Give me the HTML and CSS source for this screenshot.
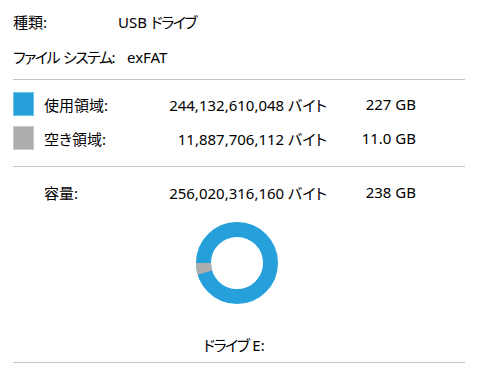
FILE: index.html
```html
<!DOCTYPE html>
<html lang="ja">
<head>
<meta charset="utf-8">
<title>ドライブ E: のプロパティ</title>
<link rel="stylesheet" href="styles.css">
</head>
<body>
<main class="props">
  <section class="info">
    <div class="info-row">
      <span class="info-label type-label">種類:</span>
      <span class="info-value">USB <span class="kana">ドライブ</span></span>
    </div>
    <div class="info-row">
      <span class="info-label fs-label"><span class="kana">ファイル</span> <span class="kana">システム</span>:</span>
      <span class="info-value">exFAT</span>
    </div>
  </section>

  <hr class="rule">

  <section class="usage">
    <div class="usage-row">
      <span class="swatch swatch-used"></span>
      <span class="usage-label">使用領域:</span>
      <span class="usage-bytes">244,132,610,048 バイト</span>
      <span class="usage-size">227 GB</span>
    </div>
    <div class="usage-row">
      <span class="swatch swatch-free"></span>
      <span class="usage-label">空き領域:</span>
      <span class="usage-bytes">11,887,706,112 バイト</span>
      <span class="usage-size">11.0 GB</span>
    </div>
  </section>

  <hr class="rule">

  <section class="capacity">
    <div class="usage-row">
      <span class="swatch-gap"></span>
      <span class="usage-label">容量:</span>
      <span class="usage-bytes">256,020,316,160 バイト</span>
      <span class="usage-size">238 GB</span>
    </div>
  </section>

  <div class="chart">
    <svg class="donut" width="84" height="84" viewBox="0 0 84 84" aria-hidden="true">
      <circle cx="42" cy="42" r="33.5" fill="none" stroke="#26a0da" stroke-width="15"/>
      <path d="M1 42 A41 41 0 0 0 2.71 53.71 L17.08 49.43 A26 26 0 0 1 16 42 Z" fill="#adadad"/>
    </svg>
  </div>

  <div class="drive-name"><span class="kana">ドライブ</span> E:</div>

  <hr class="rule">
</main>
</body>
</html>
```

FILE: styles.css
```css
html, body {
  margin: 0;
  padding: 0;
  background: #ffffff;
}

body {
  font-family: "Noto Sans", "Noto Sans CJK JP", sans-serif;
  font-size: 15px;
  color: #000000;
  white-space: nowrap;
  font-feature-settings: "palt";
}

/* katakana runs are set a little tighter than the CJK font's default */
.kana {
  letter-spacing: -1.5px;
}

.props {
  width: 452px;
  padding: 4px 15px 0 13px;
}

.info-row {
  display: flex;
  align-items: center;
  height: 35px;
}

.type-label {
  flex: 0 0 105px;
}

.fs-label {
  flex: 0 0 114px;
}

.rule {
  margin: 5px 0 0;
  border: 0;
  height: 1px;
  background: #c4c4c4;
}

.usage {
  padding: 7px 0 11px;
}

.usage + .rule {
  margin-top: 0;
}

.usage-row {
  display: grid;
  grid-template-columns: 31px 130px 153px 89px;
  align-items: center;
  height: 34px;
}

.swatch {
  width: 21px;
  height: 24px;
  box-sizing: border-box;
  border: 1px solid #e6e6e6;
}

.swatch-used {
  background: #26a0da;
  border-color: #6cc0e8;
}

.swatch-free {
  background: #adadad;
  border-color: #cacaca;
}

.usage-bytes,
.usage-size {
  justify-self: end;
}

.capacity {
  padding-top: 8px;
}

.chart {
  display: flex;
  justify-content: center;
  margin-top: 12px;
  padding-right: 4px;
}

.donut {
  display: block;
}

.drive-name {
  height: 34px;
  line-height: 34px;
  margin-top: 23px;
  text-align: center;
  padding-right: 10px;
}

.drive-name + .rule {
  margin-top: 0;
}
```
